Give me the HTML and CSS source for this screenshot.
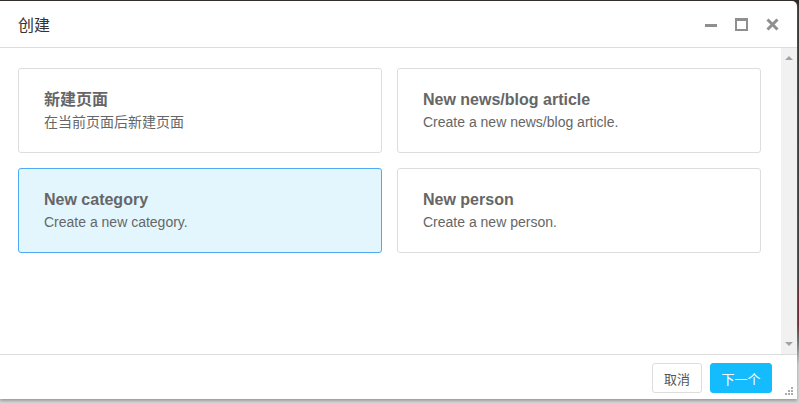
FILE: index.html
```html
<!DOCTYPE html>
<html lang="zh-CN">
<head>
  <meta charset="UTF-8" />
  <title>创建</title>
  <link rel="stylesheet" href="styles.css">
</head>
<body>

  <div class="dialog">
    <div class="dialog-header">
      <h2>创建</h2>
      <div class="win-buttons">
        <span class="btn-min"></span>
        <span class="btn-max"></span>
        <svg class="btn-close" width="13" height="13" viewBox="0 0 13 13">
          <path d="M1.5 1.5 L11.5 11.5 M11.5 1.5 L1.5 11.5" stroke="#8f8f8f" stroke-width="3"/>
        </svg>
      </div>
    </div>

    <div class="dialog-body">
      <div class="cards">
        <div class="card">
          <h3>新建页面</h3>
          <p>在当前页面后新建页面</p>
        </div>
        <div class="card">
          <h3>New news/blog article</h3>
          <p>Create a new news/blog article.</p>
        </div>
        <div class="card selected">
          <h3>New category</h3>
          <p>Create a new category.</p>
        </div>
        <div class="card">
          <h3>New person</h3>
          <p>Create a new person.</p>
        </div>
      </div>
      <div class="scrollbar">
        <span class="arrow-up"></span>
        <span class="arrow-down"></span>
      </div>
    </div>

    <div class="dialog-footer">
      <button class="btn btn-cancel">取消</button>
      <button class="btn btn-blue">下一个</button>
      <svg class="grip" width="10" height="10" viewBox="0 0 10 10">
        <rect x="7" y="1" width="2" height="2" fill="#aaa"/>
        <rect x="4" y="4" width="2" height="2" fill="#aaa"/>
        <rect x="7" y="4" width="2" height="2" fill="#aaa"/>
        <rect x="1" y="7" width="2" height="2" fill="#aaa"/>
        <rect x="4" y="7" width="2" height="2" fill="#aaa"/>
        <rect x="7" y="7" width="2" height="2" fill="#aaa"/>
      </svg>
    </div>
  </div>

</body>
</html>
```

FILE: styles.css
```css
html, body {
  margin: 0;
  height: 100%;
}
body {
  background: linear-gradient(#2e2b28 0, #3a3a3a 280px, #6a2232 295px, #6a2232 325px, #666 340px, #d6d6d6 365px);
  font-family: "Liberation Sans", "Noto Sans CJK SC", sans-serif;
  color: #666;
  overflow: hidden;
}
.dialog {
  margin-top: 1px;
  width: 797px;
  height: 398px;
  background: #fff;
  border-radius: 0 5px 0 0;
  display: flex;
  flex-direction: column;
  box-shadow: 0 2px 3px rgba(150,150,150,0.9);
}
.dialog-header {
  height: 46px;
  border-bottom: 1px solid #ddd;
  display: flex;
  align-items: center;
  justify-content: space-between;
  padding: 0 18px;
}
.dialog-header h2 {
  margin: 0;
  font-size: 16px;
  font-weight: normal;
  color: #333;
  font-family: "Noto Sans CJK SC", sans-serif;
}
.win-buttons {
  display: flex;
  align-items: center;
  gap: 18px;
}
.btn-min {
  width: 12px;
  height: 3px;
  background: #8f8f8f;
  margin-top: 2px;
}
.btn-max {
  width: 9px;
  height: 8px;
  border: 2px solid #8f8f8f;
  border-top-width: 3px;
}
.dialog-body {
  flex: 1;
  display: flex;
  min-height: 0;
}
.cards {
  flex: 1;
  display: grid;
  grid-template-columns: 364px 364px;
  grid-auto-rows: 85px;
  column-gap: 15px;
  row-gap: 15px;
  padding: 20px 0 0 18px;
  align-content: start;
}
.card {
  border: 1px solid #ddd;
  border-radius: 3px;
  padding: 21px 25px 0;
}
.card.selected {
  background: #e3f6fe;
  border-color: #4daaf3;
}
.card h3 {
  margin: 0;
  font-size: 16px;
  font-weight: bold;
  color: #666;
  line-height: 19px;
}
.card p {
  margin: 5px 0 0;
  font-size: 14px;
  color: #666;
  line-height: 17px;
}
.scrollbar {
  width: 16px;
  background: #f1f1f1;
  position: relative;
}
.arrow-up, .arrow-down {
  position: absolute;
  left: 4px;
  width: 0;
  height: 0;
  border-left: 4px solid transparent;
  border-right: 4px solid transparent;
}
.arrow-up {
  top: 8px;
  border-bottom: 4px solid #a3a3a3;
}
.arrow-down {
  bottom: 8px;
  border-top: 4px solid #a3a3a3;
}
.dialog-footer {
  height: 45px;
  border-top: 1px solid #ddd;
  display: flex;
  justify-content: flex-end;
  align-items: flex-start;
  padding: 8px 25px 0 0;
  box-sizing: border-box;
  position: relative;
  gap: 8px;
}
.btn {
  height: 30px;
  padding: 0;
  border: 1px solid #ddd;
  border-radius: 3px;
  background: #fff;
  color: #555;
  font-size: 13px;
  font-family: "Noto Sans CJK SC", sans-serif;
}
.btn-cancel {
  width: 50px;
}
.btn-blue {
  width: 62px;
  background: #14bcfd;
  border-color: #14bcfd;
  color: #fff;
}
.grip {
  position: absolute;
  right: 3px;
  bottom: 3px;
}
```
